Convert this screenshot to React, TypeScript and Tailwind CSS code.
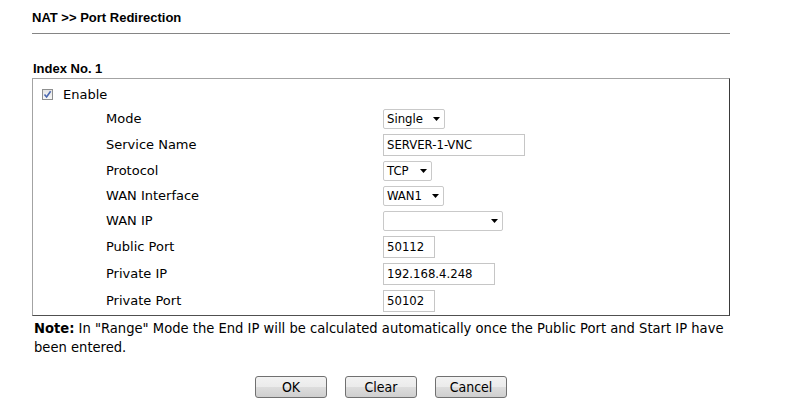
import React from "react";

const label = "font-['DejaVu_Sans',Verdana,sans-serif] text-[13px] text-black";
const field = "font-['DejaVu_Sans_Condensed','DejaVu_Sans',Tahoma,sans-serif] text-[13px] text-black";
const condensed = "font-['DejaVu_Sans_Condensed','DejaVu_Sans',Tahoma,sans-serif]";

function Arrow() {
  return (
    <svg width="7" height="4" viewBox="0 0 7 4" className="shrink-0">
      <path d="M0 0H7L3.5 4Z" fill="#000" />
    </svg>
  );
}

function Select({ value, width }: { value: string; width: string }) {
  return (
    <div
      className={`${width} h-[20px] flex items-center justify-between pl-[3px] pr-[4px] bg-white border border-[#c9c9c9] rounded-[2px] ${field}`}
    >
      <span className="leading-none">{value}</span>
      <Arrow />
    </div>
  );
}

function Input({ value, width }: { value: string; width: string }) {
  return (
    <div
      className={`${width} h-[22px] flex items-center pl-[3px] bg-white border border-[#c6c6c6] ${field}`}
    >
      <span className="leading-none">{value}</span>
    </div>
  );
}

const rows: { name: string; kind: "select" | "input"; value: string; width: string }[] = [
  { name: "Mode", kind: "select", value: "Single", width: "w-[62px]" },
  { name: "Service Name", kind: "input", value: "SERVER-1-VNC", width: "w-[142px]" },
  { name: "Protocol", kind: "select", value: "TCP", width: "w-[49px]" },
  { name: "WAN Interface", kind: "select", value: "WAN1", width: "w-[61px]" },
  { name: "WAN IP", kind: "select", value: "", width: "w-[120px]" },
  { name: "Public Port", kind: "input", value: "50112", width: "w-[52px]" },
  { name: "Private IP", kind: "input", value: "192.168.4.248", width: "w-[112px]" },
  { name: "Private Port", kind: "input", value: "50102", width: "w-[52px]" },
];

export default function App() {
  return (
    <div className="w-[787px] h-[417px] bg-white overflow-hidden">
      <div className="ml-[32px] w-[698px]">
        <div className="pt-[10px] pb-[8px] border-b border-[#858585] font-['Liberation_Sans',Arial,sans-serif] text-[13px] leading-[15px] font-bold text-black">
          NAT &gt;&gt; Port Redirection
        </div>

        <div className="mt-[27px] pl-px font-['Liberation_Sans',Arial,sans-serif] text-[13px] leading-[15px] font-bold text-black">
          Index No. 1
        </div>

        <div className="mt-[2px] h-[238px] border border-t-[#a3a3a3] border-l-[#a3a3a3] border-r-[#3a3a3a] border-b-[#505050] pt-[4px]">
          <div className="h-[23px] flex items-center pl-[9px] gap-[10px]">
            <span className="w-[11px] h-[11px] border border-[#8e8f8f] bg-[linear-gradient(#e4e4e4,#f8f8f8)] flex items-center justify-center">
              <svg width="9" height="9" viewBox="0 0 9 9">
                <path d="M1.5 4.5L3.6 7L7.6 1.3" fill="none" stroke="#4a67b0" strokeWidth="1.6" />
              </svg>
            </span>
            <span className={label}>Enable</span>
          </div>

          <div className="pl-[73px]">
            {rows.map((r) => (
              <div
                key={r.name}
                className={`grid grid-cols-[277px_1fr] items-center ${r.kind === "select" ? "h-[25px]" : "h-[27px]"}`}
              >
                <span className={label}>{r.name}</span>
                {r.kind === "select" ? (
                  <Select value={r.value} width={r.width} />
                ) : (
                  <Input value={r.value} width={r.width} />
                )}
              </div>
            ))}
          </div>
        </div>

        <div className={`mt-[2px] pl-[2px] ${condensed} text-[14.6px] leading-[19px] text-black`}>
          <div className="whitespace-nowrap">
            <span className="font-bold">Note:</span> In "Range" Mode the End IP will be calculated automatically once the Public Port and Start IP have
          </div>
          <div className="whitespace-nowrap">been entered.</div>
        </div>

        <div className="mt-[20px] flex justify-center gap-[18px]">
          {["OK", "Clear", "Cancel"].map((b) => (
            <button
              key={b}
              className={`w-[72px] h-[22px] border border-[#707070] rounded-[3px] bg-[linear-gradient(#f2f2f2,#ebebeb_50%,#dddddd_50%,#cfcfcf)] ${condensed} text-[14px] leading-none text-black`}
            >
              {b}
            </button>
          ))}
        </div>
      </div>
    </div>
  );
}
